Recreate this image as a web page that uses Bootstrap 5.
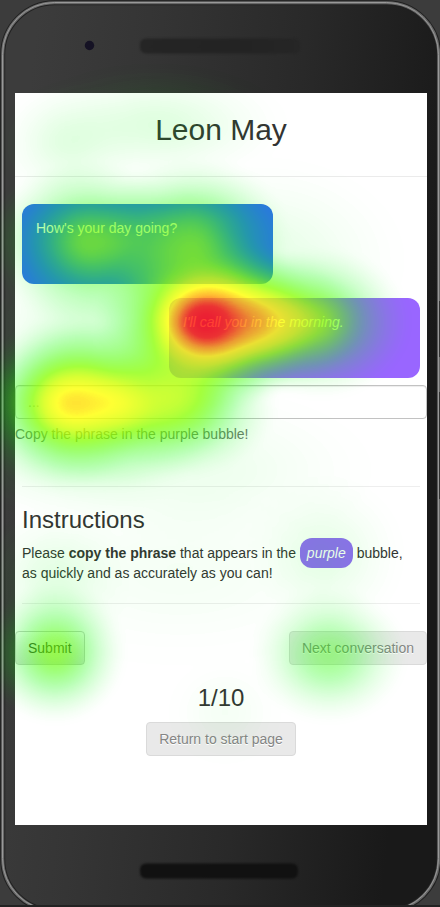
<!DOCTYPE html>
<html lang="en">
<head>
<meta charset="utf-8">
<meta name="viewport" content="width=device-width, initial-scale=1">
<title>Leon May</title>
<link href="https://cdn.jsdelivr.net/npm/bootstrap@5.3.0/dist/css/bootstrap.min.css" rel="stylesheet">
<style>
body{margin:0;width:440px;height:907px;overflow:hidden;background:#3c3c3c;color:#333;font:14px/20px "Liberation Sans",Arial,sans-serif}
.phone{width:440px;height:907px;padding:93px 13px 82px 15px}
.backdrop,.heat{left:0;top:0;width:440px;height:907px}
.heat{pointer-events:none;z-index:3}
.screen{height:732px;background:#fff;z-index:1}
.title-bar{height:84px;padding-top:20px;border-bottom:1px solid #ebebeb;margin-bottom:27px}
h1{font-size:30px;line-height:33px;font-weight:400;margin:0}
h2{font-size:24px;line-height:26px;font-weight:400;margin:0}
.chat{padding:0 7px;gap:14px}
.bubble{width:251px;height:80px;border-radius:12px;padding:14px;color:#fff}
.blue{background:#2e6df2}
.purple{background:#9966ff}
.form-control{height:34px;margin-top:7px;padding:6px 12px;font-size:14px;line-height:20px;border-color:#c2c2c2;border-radius:4px;box-shadow:inset 0 1px 1px rgba(0,0,0,.075)}
.form-control::placeholder{color:#aaa}
.hint{margin-top:5px;color:#737373}
.instructions{margin:42px 7px 27px;padding:20px 0;border-top:1px solid #eee;border-bottom:1px solid #eee}
.instructions p{margin:10px 0 0}
.pill{padding:7px;border-radius:12px;color:#fff;background:#9269f7}
.btn{height:34px;padding:6px 12px;font-size:14px;line-height:20px;border-radius:4px;border:1px solid #ccc;background:linear-gradient(#fff,#e0e0e0);color:#333}
.btn:disabled{opacity:1;color:#858585;background:#e9e9e9;border-color:#dadada;text-shadow:0 1px 0 #fff}
.counter{margin:20px 0 11px}
</style>
<script src="https://cdn.jsdelivr.net/npm/bootstrap@5.3.0/dist/js/bootstrap.bundle.min.js"></script>
</head>
<body>
<main class="phone position-relative">
<svg class="backdrop position-absolute" viewBox="0 0 440 907" aria-hidden="true">
<defs>
<linearGradient id="metal" x1="0" y1=".4" x2="1" y2=".6"><stop offset="0" stop-color="#3c3c3c"/><stop offset=".25" stop-color="#353535"/><stop offset=".6" stop-color="#292929"/><stop offset=".95" stop-color="#191919"/></linearGradient>
<linearGradient id="slot"><stop offset="0" stop-color="#252525"/><stop offset=".6" stop-color="#232323"/><stop offset="1" stop-color="#262626"/></linearGradient>
<filter id="soft" x="-20%" y="-40%" width="140%" height="180%" color-interpolation-filters="sRGB"><feGaussianBlur stdDeviation="1"/></filter>
</defs>
<rect width="440" height="907" fill="#3c3c3c"/>
<rect x="2.7" y="2.7" width="436" height="908" rx="52" fill="url(#metal)" stroke="#202020" stroke-width="5"/>
<rect x="2.7" y="2.7" width="436" height="908" rx="52" fill="none" stroke="#686868" stroke-width="3"/>
<rect x="2.5" y="2.5" width="436" height="908" rx="52" fill="none" stroke="#999" stroke-width="1"/>
<circle cx="89.5" cy="45.5" r="4.7" fill="#151224"/>
<rect x="140" y="38.5" width="160" height="15" rx="6" fill="url(#slot)" filter="url(#soft)"/>
<rect x="140" y="863.5" width="158" height="15" rx="6" fill="#111" filter="url(#soft)"/>
<path d="M439 301h1v56h-1zM439 392h1v107h-1z" fill="#333"/>
<path d="M0 905h440v2H0z" fill="#222"/>
</svg>
<section class="screen position-relative">
<header class="title-bar text-center"><h1>Leon May</h1></header>
<div class="chat d-flex flex-column">
<div class="bubble blue">How's your day going?</div>
<div class="bubble purple align-self-end fst-italic">I'll call you in the morning.</div>
</div>
<input class="form-control" type="text" placeholder="..." aria-label="Message">
<div class="hint">Copy the phrase in the purple bubble!</div>
<div class="instructions">
<h2>Instructions</h2>
<p>Please <strong>copy the phrase</strong> that appears in the <em class="pill">purple</em> bubble,<br>as quickly and as accurately as you can!</p>
</div>
<div class="d-flex justify-content-between"><button class="btn" type="button">Submit</button><button class="btn" type="button" disabled>Next conversation</button></div>
<h2 class="counter text-center">1/10</h2>
<div class="text-center"><button class="btn" type="button" disabled>Return to start page</button></div>
</section>
<svg class="heat position-absolute" viewBox="0 0 440 907" aria-hidden="true">
<defs>
<radialGradient id="g"><stop offset="0" stop-color="#fff"/><stop offset=".1" stop-color="#fff" stop-opacity=".97"/><stop offset=".2" stop-color="#fff" stop-opacity=".88"/><stop offset=".3" stop-color="#fff" stop-opacity=".75"/><stop offset=".4" stop-color="#fff" stop-opacity=".6"/><stop offset=".5" stop-color="#fff" stop-opacity=".45"/><stop offset=".6" stop-color="#fff" stop-opacity=".31"/><stop offset=".7" stop-color="#fff" stop-opacity=".2"/><stop offset=".8" stop-color="#fff" stop-opacity=".11"/><stop offset=".9" stop-color="#fff" stop-opacity=".04"/><stop offset="1" stop-color="#fff" stop-opacity="0"/></radialGradient>
<!-- Turns accumulated density into a green, yellow, red scale -->
<filter id="scale" filterUnits="userSpaceOnUse" x="0" y="0" width="440" height="907" color-interpolation-filters="sRGB">
<feGaussianBlur stdDeviation="3"/>
<feColorMatrix values="0 0 0 1 0  0 0 0 1 0  0 0 0 1 0  0 0 0 1 0"/>
<feComponentTransfer>
<feFuncR type="table" tableValues="0 0 .05 .2 .36 .54 .8 1 1 1 1"/>
<feFuncG type="table" tableValues="1 1 1 1 1 1 1 1 .65 .15 0"/>
<feFuncB type="table" tableValues="0 0"/>
<feFuncA type="table" tableValues="0 .14 .28 .43 .6 .77 .8 .8 .8 .8 .8"/>
</feComponentTransfer>
</filter>
</defs>
<g filter="url(#scale)" fill="url(#g)">
<ellipse cx="205" cy="322" rx="112" ry="94" opacity=".97"/>
<ellipse cx="262" cy="322" rx="100" ry="74" opacity=".56"/>
<ellipse cx="320" cy="322" rx="92" ry="78" opacity=".4"/>
<ellipse cx="62" cy="403" rx="92" ry="88" opacity=".58"/>
<ellipse cx="115" cy="403" rx="125" ry="86" opacity=".6"/>
<ellipse cx="187" cy="405" rx="94" ry="74" opacity=".39"/>
<ellipse cx="86" cy="242" rx="100" ry="86" opacity=".46"/>
<ellipse cx="193" cy="235" rx="98" ry="80" opacity=".42"/>
<ellipse cx="140" cy="250" rx="85" ry="84" opacity=".16"/>
<ellipse cx="95" cy="325" rx="120" ry="75" opacity=".11"/>
<ellipse cx="265" cy="260" rx="150" ry="110" opacity=".07"/>
<ellipse cx="65" cy="145" rx="75" ry="65" opacity=".07"/>
<ellipse cx="155" cy="125" rx="140" ry="65" opacity=".09"/>
<ellipse cx="80" cy="465" rx="130" ry="60" opacity=".08"/>
<ellipse cx="200" cy="470" rx="190" ry="90" opacity=".05"/>
<ellipse cx="55" cy="580" rx="80" ry="80" opacity=".07"/>
<ellipse cx="325" cy="555" rx="85" ry="85" opacity=".07"/>
<ellipse cx="180" cy="570" rx="220" ry="110" opacity=".03"/>
<ellipse cx="55" cy="653" rx="72" ry="72" opacity=".44"/>
<ellipse cx="329" cy="655" rx="80" ry="70" opacity=".3"/>
<ellipse cx="225" cy="712" rx="65" ry="60" opacity=".03"/>
</g>
</svg>
</main>
</body>
</html>
